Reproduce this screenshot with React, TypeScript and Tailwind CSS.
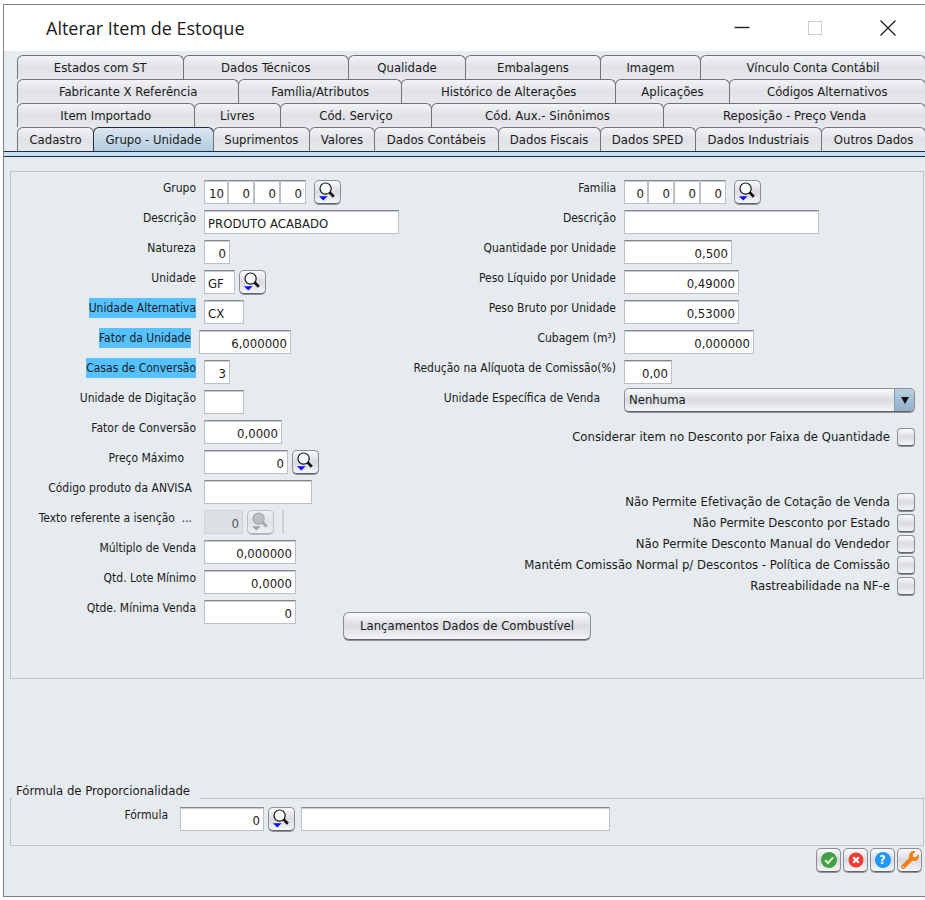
import { useState } from "react";
import type { ReactNode } from "react";
import { FaWrench } from "react-icons/fa";

type Tab = { name: string; size: string };

// Each size is the tab's share of its row
const TAB_ROWS: Tab[][] = [
  [
    { name: "Estados com ST", size: "flex-[166]" },
    { name: "Dados Técnicos", size: "flex-[166]" },
    { name: "Qualidade", size: "flex-[117]" },
    { name: "Embalagens", size: "flex-[135]" },
    { name: "Imagem", size: "flex-[100]" },
    { name: "Vínculo Conta Contábil", size: "flex-[226]" },
  ],
  [
    { name: "Fabricante X Referência", size: "flex-[222]" },
    { name: "Família/Atributos", size: "flex-[163]" },
    { name: "Histórico de Alterações", size: "flex-[215]" },
    { name: "Aplicações", size: "flex-[113]" },
    { name: "Códigos Alternativos", size: "flex-[197]" },
  ],
  [
    { name: "Item Importado", size: "flex-[177]" },
    { name: "Livres", size: "flex-[86]" },
    { name: "Cód. Serviço", size: "flex-[151]" },
    { name: "Cód. Aux.- Sinônimos", size: "flex-[233]" },
    { name: "Reposição - Preço Venda", size: "flex-[263]" },
  ],
  [
    { name: "Cadastro", size: "flex-[76]" },
    { name: "Grupo - Unidade", size: "flex-[120]" },
    { name: "Suprimentos", size: "flex-[96]" },
    { name: "Valores", size: "flex-[65]" },
    { name: "Dados Contábeis", size: "flex-[124]" },
    { name: "Dados Fiscais", size: "flex-[102]" },
    { name: "Dados SPED", size: "flex-[95]" },
    { name: "Dados Industriais", size: "flex-[127]" },
    { name: "Outros Dados", size: "flex-[104]" },
  ],
];

const FLAGS = [
  "Não Permite Efetivação de Cotação de Venda",
  "Não Permite Desconto por Estado",
  "Não Permite Desconto Manual do Vendedor",
  "Mantém Comissão Normal p/ Descontos - Política de Comissão",
  "Rastreabilidade na NF-e",
];

const BUTTON =
  "border border-[#8b8d93] border-b-[#5f6268] bg-linear-to-b from-[#fbfbfc] via-[#d9dbe1] to-[#f4f5f8] shadow-[0_1px_0_#8d9095]";

interface RowProps {
  id: string;
  label: string;
  labelWidth?: string;
  labelPad?: string;
  highlight?: boolean;
  flush?: boolean;
  children: ReactNode;
}

function Row({
  id,
  label,
  labelWidth = "w-[185px]",
  labelPad = "",
  highlight,
  flush,
  children,
}: RowProps) {
  return (
    <div className="flex h-[30px] items-start gap-2">
      <div className={`flex shrink-0 justify-end ${labelWidth} ${labelPad}`}>
        <label
          htmlFor={id}
          className={`whitespace-nowrap text-[12px] leading-5 ${
            highlight ? "bg-[#56c1ff]" : ""
          }`}
        >
          {label}
        </label>
      </div>
      <div className={`flex min-w-0 flex-1 ${flush ? "" : "pt-0.5"}`}>{children}</div>
    </div>
  );
}

interface FieldProps {
  id: string;
  value?: string;
  width: string;
  left?: boolean;
  disabled?: boolean;
  title?: string;
}

function Field({ id, value = "", width, left, disabled, title }: FieldProps) {
  return (
    <input
      id={id}
      type="text"
      defaultValue={value}
      disabled={disabled}
      aria-label={title}
      className={`h-6 min-w-0 border px-[3px] pt-0.5 text-[13px] outline-none ${width} ${
        left ? "text-left" : "text-right"
      } ${
        disabled
          ? "border-[#cfd3d8] bg-[#dcdfe4] text-[#55585c]"
          : "border-[#bcbfc3] border-t-[#85888c] bg-white shadow-[inset_0_1px_0_#c9cbce]"
      }`}
    />
  );
}

function SearchButton({ title, disabled }: { title: string; disabled?: boolean }) {
  return (
    <button
      type="button"
      aria-label={title}
      disabled={disabled}
      className={`h-6 w-[27px] shrink-0 rounded-[5px] ${BUTTON} ${
        disabled ? "opacity-45" : ""
      }`}
    >
      <svg viewBox="0 0 25 22" className="h-[22px] w-[25px]" aria-hidden="true">
        <circle
          cx="10.6"
          cy="7.6"
          r="5.6"
          fill={disabled ? "#8a8a8a" : "#f7fbfc"}
          stroke={disabled ? "#555" : "#111"}
          strokeWidth="1.2"
        />
        <path
          d="M14.6 11.4 L18.8 15.8"
          stroke={disabled ? "#555" : "#111"}
          strokeWidth="2.8"
        />
        <path d="M4 15.3 H12.6 L8.3 19.4 Z" fill={disabled ? "#444" : "#0a0aff"} />
      </svg>
    </button>
  );
}

// Group code split in four levels
function CodeFields({ id, title, values }: { id: string; title: string; values: string[] }) {
  return (
    <div className="flex">
      {values.map((value, i) => (
        <Field
          key={i}
          id={i === 0 ? id : `${id}-${i + 1}`}
          title={i === 0 ? undefined : `${title} nível ${i + 1}`}
          value={value}
          width={i === 0 ? "w-6" : "w-[26px]"}
        />
      ))}
    </div>
  );
}

function Flag({ id, label }: { id: string; label: string }) {
  return (
    <div className="flex h-[21px] items-center justify-end gap-[7px]">
      <label htmlFor={id} className="whitespace-nowrap text-[13px]">
        {label}
      </label>
      <input
        id={id}
        type="checkbox"
        className={`size-[18px] appearance-none rounded-[4px] checked:bg-[#4a90c2] ${BUTTON}`}
      />
    </div>
  );
}

function FooterButton({ title, children }: { title: string; children: ReactNode }) {
  return (
    <button
      type="button"
      aria-label={title}
      className={`flex h-6 w-[25px] items-center justify-center rounded-[5px] ${BUTTON}`}
    >
      {children}
    </button>
  );
}

function TitleBar() {
  return (
    <header className="flex h-[46px] items-center justify-between bg-white pl-[42px] pr-[29px]">
      <h1 className="font-['Open_Sans',sans-serif] text-[18px] text-[#1a1a1a]">
        Alterar Item de Estoque
      </h1>
      <div className="flex items-center gap-[57px]">
        <button type="button" aria-label="Minimizar">
          <svg viewBox="0 0 16 16" className="size-4" aria-hidden="true">
            <path d="M0.5 7.5 H15.5" stroke="#222" strokeWidth="1.4" />
          </svg>
        </button>
        <button type="button" aria-label="Maximizar" disabled>
          <svg viewBox="0 0 16 16" className="size-4" aria-hidden="true">
            <rect x="1.5" y="1.5" width="13" height="13" fill="none" stroke="#ccc" />
          </svg>
        </button>
        <button type="button" aria-label="Fechar">
          <svg viewBox="0 0 16 16" className="size-4" aria-hidden="true">
            <path d="M0.5 0.5 L15.5 15.5 M15.5 0.5 L0.5 15.5" stroke="#222" strokeWidth="1.4" />
          </svg>
        </button>
      </div>
    </header>
  );
}

function Tabs() {
  const [active, setActive] = useState("Grupo - Unidade");

  return (
    <nav className="pt-1">
      <div className="overflow-hidden pl-[13px]">
        {TAB_ROWS.map((row, i) => (
          <div key={i} className="flex h-6">
            {row.map((tab) => (
              <button
                key={tab.name}
                type="button"
                onClick={() => setActive(tab.name)}
                className={`-mr-px min-w-0 whitespace-nowrap rounded-t-[6px] border border-b-0 text-[13px] ${tab.size} ${
                  tab.name === active
                    ? "border-[#1f2c40] bg-linear-to-b from-[#dbe7f1] to-[#b0cbdf]"
                    : "border-[#707277] bg-linear-to-b from-[#f2f3f5] via-[#e0e2e7] to-[#e6e8ec]"
                }`}
              >
                {tab.name}
              </button>
            ))}
          </div>
        ))}
      </div>
      <div className="h-[6px] border-y border-[#1f2c40] bg-[#c4e0f2]" />
    </nav>
  );
}

export default function App() {
  return (
    <div className="flex min-h-screen flex-col bg-white pb-[3px] pl-[3px] pt-1 font-['DejaVu_Sans_Condensed','Noto_Sans',sans-serif] text-[#1a1a1a]">
      <main className="flex flex-1 flex-col border-y border-l border-[#7d7f82] bg-[#e6ebef]">
        <TitleBar />
        <Tabs />

        <section className="ml-1.5 mr-px mt-3.5 border border-[#bfc2c6] pb-[38px] pt-1.5">
          <div className="grid grid-cols-[392px_1fr]">
            <div>
              <Row id="grupo" label="Grupo">
                <div className="flex gap-2">
                  <CodeFields id="grupo" title="Grupo" values={["10", "0", "0", "0"]} />
                  <SearchButton title="Pesquisar grupo" />
                </div>
              </Row>
              <Row id="descricao-grupo" label="Descrição">
                <Field id="descricao-grupo" value="PRODUTO ACABADO" width="w-[195px]" left />
              </Row>
              <Row id="natureza" label="Natureza">
                <Field id="natureza" value="0" width="w-[26px]" />
              </Row>
              <Row id="unidade" label="Unidade">
                <div className="flex gap-1">
                  <Field id="unidade" value="GF" width="w-[31px]" left />
                  <SearchButton title="Pesquisar unidade" />
                </div>
              </Row>
              <Row id="unidade-alternativa" label="Unidade Alternativa" highlight>
                <Field id="unidade-alternativa" value="CX" width="w-10" left />
              </Row>
              <Row
                id="fator-unidade"
                label="Fator da Unidade"
                labelWidth="w-[180px]"
                highlight
              >
                <Field id="fator-unidade" value="6,000000" width="w-[92px]" />
              </Row>
              <Row id="casas-conversao" label="Casas de Conversão" highlight>
                <Field id="casas-conversao" value="3" width="w-[26px]" />
              </Row>
              <Row id="unidade-digitacao" label="Unidade de Digitação">
                <Field id="unidade-digitacao" width="w-10" />
              </Row>
              <Row id="fator-conversao" label="Fator de Conversão">
                <Field id="fator-conversao" value="0,0000" width="w-[78px]" />
              </Row>
              <Row id="preco-maximo" label="Preço Máximo" labelPad="pr-3">
                <div className="flex gap-1">
                  <Field id="preco-maximo" value="0" width="w-[84px]" />
                  <SearchButton title="Pesquisar preço máximo" />
                </div>
              </Row>
              <Row id="anvisa" label="Código produto da ANVISA" labelPad="pr-1">
                <Field id="anvisa" width="w-[108px]" left />
              </Row>
              <Row id="isencao" label={"Texto referente a isenção\u00a0 ..."} labelPad="pr-1">
                <div className="flex gap-1">
                  <Field id="isencao" value="0" width="w-[39px]" disabled />
                  <SearchButton title="Pesquisar texto de isenção" disabled />
                  <span className="ml-1 border-l-2 border-[#d0d3d7]" />
                </div>
              </Row>
              <Row id="multiplo-venda" label="Múltiplo de Venda">
                <Field id="multiplo-venda" value="0,000000" width="w-[92px]" />
              </Row>
              <Row id="lote-minimo" label="Qtd. Lote Mínimo">
                <Field id="lote-minimo" value="0,0000" width="w-[92px]" />
              </Row>
              <Row id="minima-venda" label="Qtde. Mínima Venda">
                <Field id="minima-venda" value="0" width="w-[92px]" />
              </Row>
            </div>

            <div className="pr-2">
              <Row id="familia" label="Familia" labelWidth="w-[213px]">
                <div className="flex gap-2">
                  <CodeFields id="familia" title="Familia" values={["0", "0", "0", "0"]} />
                  <SearchButton title="Pesquisar familia" />
                </div>
              </Row>
              <Row id="descricao-familia" label="Descrição" labelWidth="w-[213px]">
                <Field id="descricao-familia" width="w-[195px]" left />
              </Row>
              <Row id="quantidade" label="Quantidade por Unidade" labelWidth="w-[213px]">
                <Field id="quantidade" value="0,500" width="w-[108px]" />
              </Row>
              <Row id="peso-liquido" label="Peso Líquido por Unidade" labelWidth="w-[213px]">
                <Field id="peso-liquido" value="0,49000" width="w-[115px]" />
              </Row>
              <Row id="peso-bruto" label="Peso Bruto por Unidade" labelWidth="w-[213px]">
                <Field id="peso-bruto" value="0,53000" width="w-[115px]" />
              </Row>
              <Row id="cubagem" label="Cubagem (m³)" labelWidth="w-[213px]">
                <Field id="cubagem" value="0,000000" width="w-[130px]" />
              </Row>
              <Row
                id="reducao"
                label="Redução na Alíquota de Comissão(%)"
                labelWidth="w-[213px]"
              >
                <Field id="reducao" value="0,00" width="w-[48px]" />
              </Row>
              <Row
                id="unidade-venda"
                label="Unidade Específica de Venda"
                labelWidth="w-[213px]"
                labelPad="pr-4"
                flush
              >
                <div className="relative flex-1">
                  <select
                    id="unidade-venda"
                    className={`block h-6 w-full appearance-none rounded-[5px] pl-1 pr-6 text-[13px] ${BUTTON}`}
                  >
                    <option>Nenhuma</option>
                  </select>
                  <span className="pointer-events-none absolute right-px top-px flex h-[22px] w-5 items-center justify-center rounded-r-[4px] border-l border-[#7f9bb1] bg-linear-to-b from-[#b9cfdf] to-[#8fb0c8]">
                    <svg viewBox="0 0 8 7" className="h-[7px] w-2" aria-hidden="true">
                      <path d="M0 0 H8 L4 7 Z" fill="#111" />
                    </svg>
                  </span>
                </div>
              </Row>

              <div className="pt-2">
                <Flag id="desconto-faixa" label="Considerar item no Desconto por Faixa de Quantidade" />
              </div>
              <div className="pt-11">
                {FLAGS.map((flag, i) => (
                  <Flag key={flag} id={`flag-${i}`} label={flag} />
                ))}
              </div>
            </div>
          </div>

          <div className="-mt-4 flex justify-center">
            <button type="button" className={`h-7 rounded-[6px] px-4 text-[13px] ${BUTTON}`}>
              Lançamentos Dados de Combustível
            </button>
          </div>
        </section>

        <fieldset className="ml-1.5 mr-px mt-auto border border-[#bfc2c6] pb-2.5">
          <legend className="ml-px pb-3.5 pl-1 pr-2.5 text-[13px] leading-5">
            Fórmula de Proporcionalidade
          </legend>
          <div className="-mt-2.5">
            <Row id="formula" label="Fórmula" labelWidth="w-[161px]" labelPad="pr-1">
              <Field id="formula" value="0" width="mr-1 w-[84px]" />
              <SearchButton title="Pesquisar fórmula" />
              <Field id="formula-descricao" title="Descrição da fórmula" width="ml-1.5 w-[309px]" left />
            </Row>
          </div>
        </fieldset>

        <footer className="flex justify-end gap-0.5 pb-6 pr-[3px] pt-0.5">
          <FooterButton title="Confirmar">
            <svg viewBox="0 0 18 18" className="size-[18px]" aria-hidden="true">
              <circle cx="9" cy="9" r="8" fill="#43a047" />
              <path d="M5 9.3 L8 12 L13.2 6.4" fill="none" stroke="#dcf5c8" strokeWidth="2" />
            </svg>
          </FooterButton>
          <FooterButton title="Cancelar">
            <svg viewBox="0 0 18 18" className="size-[18px]" aria-hidden="true">
              <circle cx="9" cy="9" r="7.5" fill="#f43b30" />
              <path d="M6.2 6.2 L11.8 11.8 M11.8 6.2 L6.2 11.8" stroke="#fff" strokeWidth="2.2" />
            </svg>
          </FooterButton>
          <FooterButton title="Ajuda">
            <span className="flex size-4 items-center justify-center rounded-full bg-[#2196f3] text-[12px] font-bold leading-none text-white">
              ?
            </span>
          </FooterButton>
          <FooterButton title="Configurar">
            <FaWrench className="size-[18px] text-[#f07f1e]" aria-hidden="true" />
          </FooterButton>
        </footer>
      </main>
    </div>
  );
}
